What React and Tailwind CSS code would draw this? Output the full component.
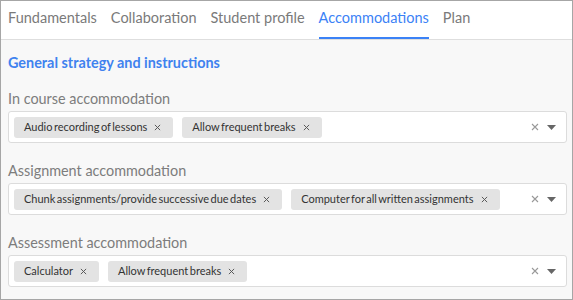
import React from "react"

const tabs = ["Fundamentals", "Collaboration", "Student profile", "Accommodations", "Plan"]

const sections = [
  { label: "In course accommodation", chips: ["Audio recording of lessons", "Allow frequent breaks"] },
  {
    label: "Assignment accommodation",
    chips: ["Chunk assignments/provide successive due dates", "Computer for all written assignments"],
  },
  { label: "Assessment accommodation", chips: ["Calculator", "Allow frequent breaks"] },
]

const Cross = ({ size = 7, color = "#666" }) => (
  <svg width={size} height={size} viewBox="0 0 8 8" fill="none">
    <path d="M1 1L7 7M7 1L1 7" stroke={color} strokeWidth="1.1" />
  </svg>
)

const MultiSelect = ({ chips }) => (
  <div className="flex items-center h-[32px] w-[559px] bg-white border border-[#dcdcdc] rounded-[3px] pl-[5px] pr-[10px]">
    <div className="flex flex-1 items-center gap-[9px] pt-[1px]">
      {chips.map((c) => (
        <span
          key={c}
          className="flex items-center whitespace-nowrap h-[21px] bg-[#e3e3e3] rounded-[3px] pl-[10px] pr-[12px] text-[11px] text-[#333] [word-spacing:-1.3px]"
        >
          {c}
          <span className="ml-[7px] flex items-center">
            <Cross size={7} color="#555" />
          </span>
        </span>
      ))}
    </div>
    <div className="flex items-center gap-[8px]">
      <Cross size={8} color="#999" />
      <svg width="9" height="5" viewBox="0 0 9 5">
        <path d="M0 0H9L4.5 5Z" fill="#666" />
      </svg>
    </div>
  </div>
)

export default function App() {
  return (
    <div
      className="w-[573px] h-[300px] border border-[#a6a6a6] bg-[#f8f8f8] overflow-hidden"
      style={{ fontFamily: "Lato, 'Open Sans', sans-serif" }}
    >
      <div className="flex h-[39px] bg-white border-b border-[#dedede] pl-[7px] gap-[14px]">
        {tabs.map((t) => (
          <div
            key={t}
            className={`flex items-start pt-[6px] text-[14.5px] border-b-2 ${
              t === "Accommodations" ? "text-[#3b82f6] border-[#3b82f6]" : "text-[#7a7a7a] border-transparent"
            }`}
          >
            {t}
          </div>
        ))}
      </div>
      <div className="pl-[7px] pt-[13px]">
        <h3 className="text-[14.4px] leading-[20px] font-bold text-[#3f82ef]">General strategy and instructions</h3>
        <div className="flex flex-col gap-[18px] mt-[16px]">
          {sections.map((s) => (
            <div key={s.label}>
              <div className="text-[14.4px] leading-[20px] text-[#7d7d7d] mb-[2px]">{s.label}</div>
              <MultiSelect chips={s.chips} />
            </div>
          ))}
        </div>
      </div>
    </div>
  )
}
